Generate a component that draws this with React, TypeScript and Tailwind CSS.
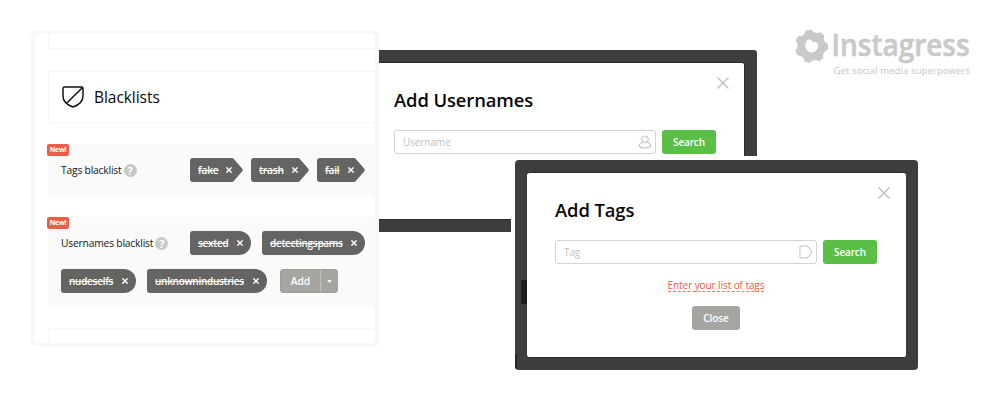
import React from "react";

function CrossIcon({ className }: { className: string }) {
  return (
    <svg viewBox="0 0 12 12" className={className} fill="none" stroke="currentColor" strokeWidth="1.25">
      <path d="M0.5 0.5 L11.5 11.5 M11.5 0.5 L0.5 11.5" />
    </svg>
  );
}

function ChipCross() {
  return (
    <svg viewBox="0 0 6 6" className="h-[6px] w-[6px] shrink-0" fill="none" stroke="#fff" strokeWidth="1.4">
      <path d="M0.4 0.4 L5.6 5.6 M5.6 0.4 L0.4 5.6" />
    </svg>
  );
}

function TagChip({ label, width }: { label: string; width: string }) {
  return (
    <div className={`flex h-6 shrink-0 ${width}`}>
      <div className="flex min-w-0 flex-1 items-center justify-between rounded-l-[3px] bg-[#646462] pl-2 text-[10.2px] font-semibold leading-6 tracking-[-0.2px] text-white">
        <span className="whitespace-nowrap line-through decoration-1">{label}</span>
        <ChipCross />
      </div>
      <svg viewBox="0 0 11 24" className="h-6 w-[11px] shrink-0" fill="#646462">
        <path d="M0 0 Q1 0 1.8 1 L10.3 10.8 Q11.2 12 10.3 13.2 L1.8 23 Q1 24 0 24 Z" />
      </svg>
    </div>
  );
}

function UserChip({ label, width }: { label: string; width: string }) {
  return (
    <div className={`flex h-6 shrink-0 items-center justify-between rounded-l-[3px] rounded-r-[12px] bg-[#646462] pl-2 pr-2 text-[10px] font-semibold leading-6 tracking-[-0.28px] text-white ${width}`}>
      <span className="whitespace-nowrap line-through decoration-1">{label}</span>
      <ChipCross />
    </div>
  );
}

function NewBadge() {
  return (
    <span className="absolute -left-px top-0 flex h-[11.5px] w-[22px] items-center justify-center rounded-[2px] bg-[#ea5f4a] text-[7px] font-bold tracking-[-0.3px] text-white">
      New!
    </span>
  );
}

function Help() {
  return (
    <span className="flex h-[13px] w-[13px] items-center justify-center rounded-full bg-[#c8c8c7] text-[11px] font-bold leading-none tracking-normal text-white">
      ?
    </span>
  );
}

function RowLabel({ children }: { children: string }) {
  return (
    <div className="flex w-[129px] shrink-0 items-center gap-[2px] whitespace-nowrap text-[10.3px] tracking-[-0.2px] text-[#181818]">
      <span className="pt-px">{children}</span>
      <Help />
    </div>
  );
}

function BlacklistPanel() {
  return (
    <section className="absolute left-[31px] top-[30px] flex h-[317px] w-[348px] flex-col overflow-hidden rounded-[7px] border-4 border-[#f8f8f8] bg-white pl-[13px]">
      <div className="h-[15px] shrink-0 border-b border-l border-[#f6f6f6]" />
      <header className="mt-[22px] flex h-[52px] shrink-0 items-center border-y border-l border-[#f6f6f6] pl-[13px]">
        <svg viewBox="0 0 22 22" className="h-[22px] w-[22px]" fill="none" stroke="#111" strokeWidth="1.5" strokeLinejoin="round">
          <path d="M2.5 1 H19.5 Q21 1 21 2.5 V10 C21 16 16 19.3 11 21 C6 19.3 1 16 1 10 V2.5 Q1 1 2.5 1 Z M20.3 1.8 L4.6 17.3" />
        </svg>
        <h2 className="pl-[10px] pt-[2px] text-[15.5px] leading-none tracking-[-0.05px] text-[#080808]">Blacklists</h2>
      </header>
      <div className="relative mt-[21px] flex h-[52px] shrink-0 items-center bg-[#fafaf8] pl-[13px]">
        <NewBadge />
        <RowLabel>Tags blacklist</RowLabel>
        <div className="flex gap-2">
          <TagChip label="fake" width="w-[53px]" />
          <TagChip label="trash" width="w-[58px]" />
          <TagChip label="fail" width="w-[48px]" />
        </div>
      </div>
      <div className="relative mt-[21px] flex h-[90px] shrink-0 flex-col gap-[14px] bg-[#fafaf8] pl-[13px] pt-[14px]">
        <NewBadge />
        <div className="flex">
          <RowLabel>Usernames blacklist</RowLabel>
          <div className="flex gap-[11px]">
            <UserChip label="sexted" width="w-[61px]" />
            <UserChip label="detectingspams" width="w-[103px]" />
          </div>
        </div>
        <div className="flex">
          <UserChip label="nudeselfs" width="w-[75px]" />
          <div className="w-[11px]" />
          <UserChip label="unknownindustries" width="w-[120px]" />
          <button className="ml-[13px] flex h-6 w-[58px] overflow-hidden rounded-[3px] border border-[#a0a09d] bg-[#a5a5a2] text-[10.3px] font-semibold leading-[22px] tracking-[-0.1px] text-white">
            <span className="w-[40px] border-r border-[#c0c0be]">Add</span>
            <span className="flex flex-1 items-center justify-center self-stretch">
              <svg viewBox="0 0 6 4" className="h-[3px] w-[5px]" fill="#fff"><path d="M0 0 H6 L3 4 Z" /></svg>
            </span>
          </button>
        </div>
      </div>
      <div className="mt-[21px] h-6 shrink-0 border-l border-t border-[#f7f7f7]" />
    </section>
  );
}

function SearchForm({ placeholder, icon }: { placeholder: string; icon: React.ReactNode }) {
  return (
    <div className="flex gap-[6px]">
      <div className="flex h-6 w-[262px] items-center justify-between rounded-[3px] border border-[#d4d4d4] bg-white pl-[8px] pr-[3px] text-[10px] tracking-[-0.1px] text-[#c2c2bf]">
        {placeholder}
        {icon}
      </div>
      <button className="h-6 w-[54px] rounded-[3px] bg-[#5abf47] text-[10px] font-semibold leading-6 tracking-[-0.15px] text-white">Search</button>
    </div>
  );
}

const TEETH = [-10, 41, 93, 144, 195, 247, 298];

function polar(angle: number, radius: number) {
  const rad = (angle * Math.PI) / 180;
  return `${(18.5 + radius * Math.sin(rad)).toFixed(2)} ${(27.3 - radius * Math.cos(rad)).toFixed(2)}`;
}

const GEAR = TEETH.map(
  (a, i) => `${i === 0 ? "M" : "L"}${polar(a - 8, 16)} L${polar(a + 8, 16)} Q${polar(a + 25.5, 11.2)} ${polar(a + 43.4, 16)}`
).join(" ");

function Logo() {
  return (
    <svg viewBox="0 0 190 64" className="absolute left-[793px] top-[19px] h-[64px] w-[190px]" fill="#c9c9c8">
      <path d={`${GEAR} Z`} stroke="#c9c9c8" strokeWidth="1.4" strokeLinejoin="round" />
      <path
        d="M16 20.4 Q18.6 20.2 19.3 23 Q22 22.2 24.3 24.2 Q26.4 27.2 24 30.6 Q21.8 33.4 18.2 33.5 Q12.6 32.6 12.4 26.6 Q12.2 21.4 16 20.4 Z"
        fill="#fff"
      />
      <text x="38.5" y="37" fontSize="30" fontWeight="600" textLength="138" lengthAdjust="spacingAndGlyphs" stroke="#c9c9c8" strokeWidth="0.6" className="font-['Open_Sans',sans-serif]">Instagress</text>
      <text x="40.5" y="55" fontSize="9.5" textLength="136.5" className="font-['Noto_Sans',sans-serif]">Get social media superpowers</text>
    </svg>
  );
}

export default function App() {
  return (
    <main className="relative h-[400px] w-[1000px] overflow-hidden bg-white font-['Open_Sans','Noto_Sans',sans-serif]">
      <section className="absolute left-[379px] top-[50px] h-[182px] w-[378px] rounded-tr-[3px] bg-[#3d3d3d] pb-[12px] pr-[12px] pt-[12px]">
        <div className="relative h-full rounded-r-[3px] border-b border-r border-t border-[#2c2c2c] bg-white pl-[15px] pt-[25px]">
          <CrossIcon className="absolute right-[15px] top-[14px] h-3 w-3 text-[#bdbdbd]" />
          <h2 className="mb-[18px] text-[18.4px] font-semibold leading-[24px] tracking-[-0.1px] text-[#080808]">Add Usernames</h2>
          <SearchForm
            placeholder="Username"
            icon={
              <svg viewBox="0 0 14 14" className="h-[14px] w-[14px]" fill="none" stroke="#c6c6c6" strokeWidth="1.2">
                <circle cx="7" cy="4.2" r="3.2" />
                <path d="M4.6 7 Q1.5 8.4 1 11 Q3 13 7 13 Q11 13 13 11 Q12.5 8.4 9.4 7" />
              </svg>
            }
          />
        </div>
      </section>
      <BlacklistPanel />
      <section className="absolute left-[511px] top-[156px] h-[214px] w-[407px] bg-white pl-1 pt-1">
        <div className="relative h-full overflow-hidden rounded-[4px] bg-[#3d3d3d] p-[12px]">
          <span className="absolute left-[6px] top-[120px] h-6 w-[8px] rounded-l-[2px] bg-[#1c1c1c]" />
          <span className="absolute bottom-0 left-0 h-4 w-[2px] bg-[#252525]" />
          <div className="relative flex h-full flex-col rounded-[3px] border-y border-[#2c2c2c] bg-white pl-[28px] pt-[25px]">
            <CrossIcon className="absolute right-[16px] top-[14px] h-3 w-3 text-[#bdbdbd]" />
            <h2 className="mb-[18px] text-[18.4px] font-semibold leading-[24px] tracking-[-0.1px] text-[#080808]">Add Tags</h2>
            <SearchForm
              placeholder="Tag"
              icon={
                <svg viewBox="0 0 14 14" className="h-[14px] w-[14px]" fill="none" stroke="#c6c6c6" strokeWidth="1.1" strokeLinejoin="round">
                  <path d="M2 1 H8.5 L12.5 6 Q13 7 12.5 8 L8.5 13 H2 Q1 13 1 12 V2 Q1 1 2 1 Z" />
                  <circle cx="9" cy="7" r="0.1" />
                </svg>
              }
            />
            <div className="flex w-[322px] flex-col items-center">
              <a className="mt-[14px] h-[14px] whitespace-nowrap border-b border-dashed border-[#ea7a68] text-[10px] leading-[14px] tracking-[-0.08px] text-[#e95c46]">Enter your list of tags</a>
              <button className="mt-[14px] h-6 w-[48px] rounded-[3px] bg-[#a5a5a2] text-[10px] font-semibold leading-6 tracking-[-0.1px] text-white">Close</button>
            </div>
          </div>
        </div>
      </section>
      <Logo />
    </main>
  );
}
